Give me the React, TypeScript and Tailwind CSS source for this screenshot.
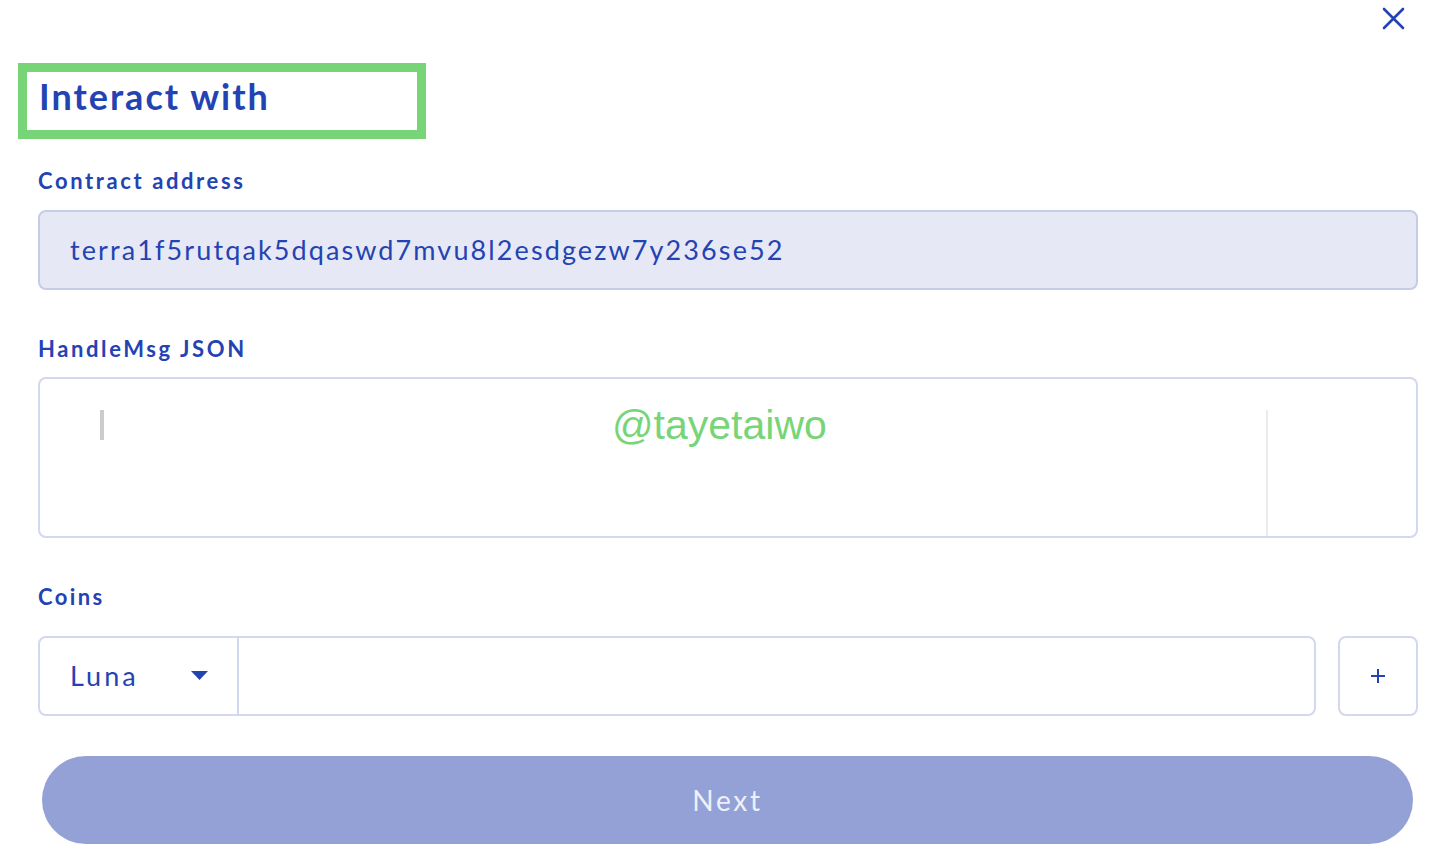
import React from "react";

export default function App() {
  const font = { fontFamily: "Lato, 'Noto Sans', sans-serif" };
  return (
    <div className="relative w-[1434px] h-[848px] overflow-hidden bg-white pl-[38px] pr-[16px] text-[#2443b3]" style={font}>
      <button className="absolute top-[7px] right-[29px] w-[23px] h-[23px]" aria-label="close">
        <svg viewBox="0 0 23 23" width="23" height="23" fill="none" stroke="#2443b3" strokeWidth="2.6" strokeLinecap="round">
          <path d="M2 2 L21 21 M21 2 L2 21" />
        </svg>
      </button>

      <div className="pt-[63px]">
        <div className="-ml-[20px] w-[408px] h-[76px] border-[9px] border-[#78d577] pl-[12px] flex items-center">
          <h1 className="text-[36px] font-bold leading-none tracking-[2px] -mt-[10px]">Interact with</h1>
        </div>
      </div>

      <div className="mt-[28px] text-[22px] font-bold leading-[28px] tracking-[2.6px]">Contract address</div>
      <div className="mt-[15px] h-[80px] rounded-[8px] border-2 border-[#c5cce7] bg-[#e6e9f5] flex items-center pl-[30px] text-[27px] tracking-[2.1px]">
        terra1f5rutqak5dqaswd7mvu8l2esdgezw7y236se52
      </div>

      <div className="mt-[45px] text-[22px] font-bold leading-[28px] tracking-[2.6px]">HandleMsg JSON</div>
      <div className="mt-[14px] h-[161px] rounded-[8px] border-2 border-[#d3d8ee] bg-white relative flex">
        <div className="flex-1 relative">
          <div className="absolute left-[60px] top-[31px] w-[4px] h-[30px] bg-[#cccccc]" />
          <div className="absolute left-[572px] top-[22px] text-[41px] leading-[48px] text-[#78d577]" style={{ fontFamily: "'Liberation Sans', Arial, sans-serif" }}>
            @tayetaiwo
          </div>
        </div>
        <div className="mt-[31px] w-[2px] bg-[#ebebeb]" />
        <div className="w-[148px]" />
      </div>

      <div className="mt-[45px] text-[22px] font-bold leading-[28px] tracking-[2.4px]">Coins</div>
      <div className="mt-[25px] flex gap-[22px]">
        <div className="flex-1 h-[80px] flex rounded-[8px] border-2 border-[#d3d8ee]">
          <div className="w-[199px] h-full flex items-center justify-between pl-[30px] pr-[29px] border-r-2 border-[#d3d8ee]">
            <span className="text-[27px] tracking-[3px]">Luna</span>
            <svg width="17" height="10" viewBox="0 0 17 10">
              <path d="M0 0 L17 0 L8.5 9 Z" fill="#2443b3" />
            </svg>
          </div>
          <div className="flex-1" />
        </div>
        <div className="w-[80px] h-[80px] rounded-[8px] border-2 border-[#d3d8ee] flex items-center justify-center">
          <svg width="16" height="16" viewBox="0 0 16 16" stroke="#2443b3" strokeWidth="2">
            <path d="M8 1 V15 M1 8 H15" />
          </svg>
        </div>
      </div>

      <div className="mt-[40px] ml-[4px] mr-[5px] h-[88px] rounded-full bg-[#93a1d6] flex items-center justify-center text-[28px] text-[#eef0fa] tracking-[2.7px]">
        Next
      </div>
    </div>
  );
}
